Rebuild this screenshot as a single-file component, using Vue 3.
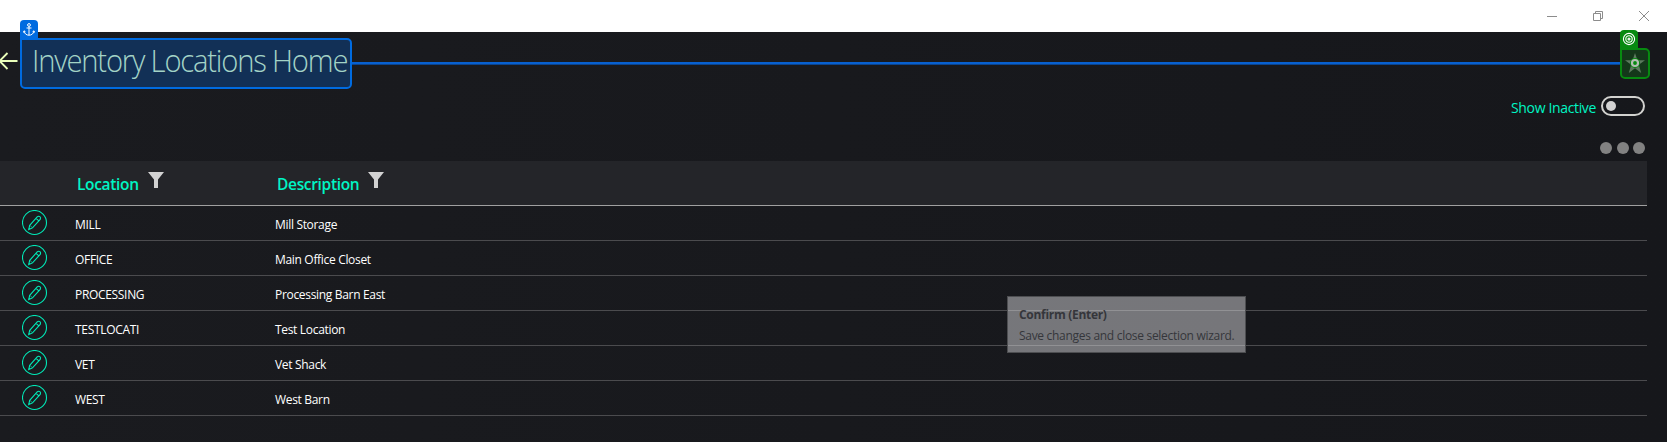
<script setup>
const rows = [
  ['MILL', 'Mill Storage'],
  ['OFFICE', 'Main Office Closet'],
  ['PROCESSING', 'Processing Barn East'],
  ['TESTLOCATI', 'Test Location'],
  ['VET', 'Vet Shack'],
  ['WEST', 'West Barn'],
]
</script>

<template>
  <div class="window">
    <header class="titlebar">
      <svg width="110" height="32" viewBox="0 0 110 32" fill="none" stroke="#8c8c8c">
        <path d="M0 16.5h10" />
        <path d="M46.5 13.5h7v7h-7zM48.5 13v-1.500h7v7H54" />
        <path d="M92 11l10 10M102 11L92 21" />
      </svg>
    </header>

    <section class="heading">
      <svg class="back" width="20" height="20" viewBox="0 0 20 20" fill="none" stroke="#eaffbb" stroke-width="1.8">
        <path d="M17.500 10H0M7.500 2L-.5 10l8 8" />
      </svg>
      <div class="title">
        <span class="tag">
          <svg width="12" height="14" viewBox="0 0 12 14" fill="none" stroke="#fff" stroke-width="1">
            <circle cx="6" cy="2" r="1.400" />
            <path d="M6 3.500v8.700M3.500 5h5M1 8c.5 2.800 2.500 4.200 5 4.200s4.500-1.400 5-4.200M.5 9.500L1 7.800l1.500 1M11.500 9.500L11 7.800l-1.500 1" />
          </svg>
        </span>
        <h1>Inventory Locations Home</h1>
      </div>
      <div class="connector"></div>
      <div class="target">
        <span class="tag">
          <svg width="14" height="14" viewBox="0 0 14 14" fill="none" stroke="#fff" stroke-width="1.100">
            <circle cx="7" cy="7" r="5.600" /><circle cx="7" cy="7" r="3.200" /><circle cx="7" cy="7" r="1" />
          </svg>
        </span>
        <svg width="26" height="27" viewBox="0 0 26 27">
          <path d="M13 3l2.400 7.300H23l-6.200 4.500 2.400 8.200-6.200-4.800L6.800 23l2.400-8.200L3 10.300h7.600z" fill="#5c7a5e" />
          <circle cx="13" cy="13" r="5" fill="#078a10" />
          <circle cx="13" cy="13" r="3" fill="none" stroke="#b4beb4" stroke-width="2.200" />
        </svg>
      </div>
    </section>

    <section class="toggle">
      <span class="label">Show Inactive</span>
      <span class="switch"><i></i></span>
    </section>
    <div class="more"><i></i><i></i><i></i></div>

    <div class="table">
      <div class="row head">
        <span></span>
        <div class="cell"><b class="loc">Location</b><svg width="16" height="16" viewBox="0 0 16 16" fill="#d2d2d2"><path d="M0 0h16l-6 7.500V16H6V7.500z" /></svg></div>
        <div class="cell"><b class="desc">Description</b><svg width="16" height="16" viewBox="0 0 16 16" fill="#d2d2d2"><path d="M0 0h16l-6 7.500V16H6V7.500z" /></svg></div>
      </div>
      <div v-for="r in rows" :key="r[0]" class="row">
        <svg class="edit" width="26" height="26" viewBox="0 0 26 26" fill="none" stroke="#00eab8" stroke-width="1.100">
          <circle cx="12.500" cy="12.500" r="12" />
          <path d="M6.700 19.600l1-4.300 7.700-8.600q1.300-1 2.500 0t.3 2.700l-7.700 8.500zM14 8.300l2.900 2.600" />
          <path d="M7.900 15.300l2.500 2.500" stroke-width=".7" />
        </svg>
        <span class="text">{{ r[0] }}</span>
        <span class="text">{{ r[1] }}</span>
      </div>
    </div>

    <aside class="tooltip">
      <strong>Confirm (Enter)</strong>
      <p>Save changes and close selection wizard.</p>
    </aside>
  </div>
</template>

<style>
body { margin: 0; }
</style>

<style scoped>
* { box-sizing: border-box; }
svg { display: block; flex: none; }
.window { position: relative; width: 1667px; height: 442px; overflow: hidden; background: linear-gradient(90deg, #1a1b1f, #16171b); font-family: "Open Sans", "Noto Sans", sans-serif; }
.titlebar { height: 32px; background: #fff; display: flex; justify-content: flex-end; padding-right: 10px; }
.heading { height: 57px; padding-top: 6px; display: flex; align-items: flex-start; }
.back { width: 20px; margin-top: 13px; }
.title { position: relative; width: 332px; height: 51px; border: 2px solid #006be0; border-radius: 0 5px 5px 5px; background: #123056; }
.title .tag { position: absolute; left: -2px; top: -20px; width: 18px; height: 20px; border-radius: 4px 4px 0 0; background: #006be0; padding: 3px; }
h1 { margin: 0; padding-left: 10px; font-size: 31.500px; line-height: 39px; font-weight: 300; letter-spacing: -1.300px; color: #a3d3c6; white-space: nowrap; transform-origin: 10px 0; transform: scaleX(.928); }
.connector { width: 1268px; height: 3px; margin-top: 24px; background: #0860cf; border-bottom: 1px solid #0b448d; }
.target { position: relative; width: 30px; height: 31px; margin-top: 10px; border: 2px solid #078a10; border-radius: 0 5px 5px 5px; background: #14371a; }
.target .tag { position: absolute; left: -2px; top: -20px; width: 18px; height: 20px; background: #078a10; border-radius: 4px 4px 0 0; padding: 2px 2px; }
.toggle { height: 34px; padding: 7px 22px 0 0; display: flex; justify-content: flex-end; }
.label { color: #00f5c4; font-size: 14px; line-height: 23px; margin-right: 5px; letter-spacing: -.35px; }
.switch { width: 44px; height: 20px; border: 2px solid #d2d2cf; border-radius: 10px; padding: 3px; }
.switch i { display: block; width: 10px; height: 10px; border-radius: 50%; background: #d2d2d2; }
.more { height: 38px; display: flex; gap: 4.500px; justify-content: flex-end; padding: 19px 22px 0 0; }
.more i { width: 12px; height: 12px; border-radius: 50%; background: #828282; }
.table { width: 1647px; }
.row { display: grid; grid-template-columns: 75px 200px 1fr; height: 35px; border-bottom: 1px solid #4b4b4e; }
.head { height: 45px; background: #242529; border-color: #a0a0a0; }
.cell { display: flex; gap: 9px; padding-top: 11px; padding-left: 2px; }
.cell b { font-weight: 600; font-size: 15.500px; line-height: 25px; color: #00f5c4; letter-spacing: -.33px; white-space: nowrap; }
.loc { width: 62px; }
.desc { width: 82px; }
.edit { margin: 4px 0 0 22px; }
.text { color: #fff; font-size: 12px; line-height: 38px; letter-spacing: -.32px; white-space: nowrap; }
.tooltip { position: absolute; left: 1007px; top: 296px; width: 239px; height: 57px; border: 1px solid #4d4e51; background: rgba(222, 222, 225, .48); padding: 10px 11px; color: #35363b; font-size: 12px; line-height: 16px; white-space: nowrap; letter-spacing: -.3px; }
.tooltip strong { display: block; }
.tooltip p { margin: 5px 0 0; }
</style>
